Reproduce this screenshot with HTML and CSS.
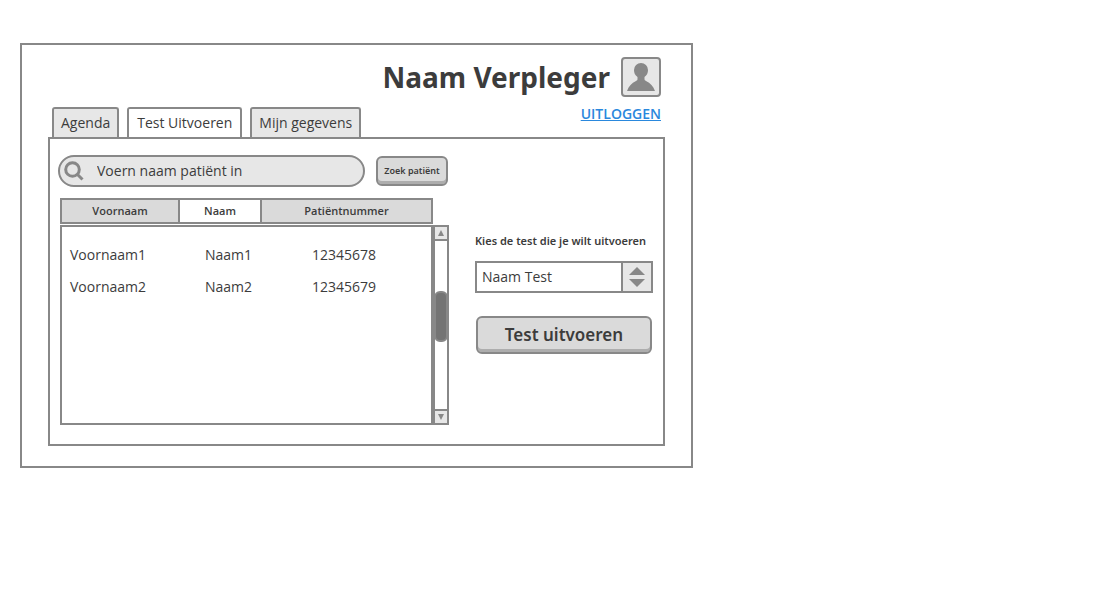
FILE: index.html
```html
<!DOCTYPE html>
<html lang="nl">
<head>
<meta charset="utf-8">
<meta name="viewport" content="width=device-width, initial-scale=1">
<title>Test Uitvoeren</title>
<link rel="stylesheet" href="styles.css">
</head>
<body>
<div class="window">
  <header class="header">
    <h1 class="title">Naam Verpleger</h1>
    <span class="avatar">
      <svg viewBox="0 0 36 36" aria-hidden="true"><path d="M18 4a7 7 0 0 1 7 7c0 3-1 5-3.500 7v2c0 1 .5 1.500 1.500 2C27.500 24 30 27 32 32H4c2-5 4.500-8 9-10c1-.5 1.500-1 1.500-2v-2C12 16 11 14 11 11a7 7 0 0 1 7-7z"/></svg>
    </span>
  </header>
  <div class="bar">
    <nav class="tabs">
      <a class="tab" href="#agenda">Agenda</a>
      <a class="tab tab-active" href="#test" aria-current="page">Test Uitvoeren</a>
      <a class="tab" href="#gegevens">Mijn gegevens</a>
    </nav>
    <a class="logout" href="#uitloggen">UITLOGGEN</a>
  </div>
  <main class="panel">
    <section class="patients">
      <form class="search">
        <label class="search-field">
          <svg class="search-icon" viewBox="0 0 20 20" aria-hidden="true"><circle cx="8.500" cy="8.500" r="6.800"/><path d="M13.500 13.500l5 5"/></svg>
          <input class="search-input" type="text" aria-label="Naam patiënt" placeholder="Voern naam patiënt in">
        </label>
        <button class="button button-small" type="button">Zoek patiënt</button>
      </form>
      <div class="list">
        <table class="table">
          <thead>
            <tr class="head-row"><th>Voornaam</th><th class="sorted">Naam</th><th>Patiëntnummer</th></tr>
          </thead>
          <tbody class="rows">
            <tr class="row"><td>Voornaam1</td><td>Naam1</td><td>12345678</td></tr>
            <tr class="row"><td>Voornaam2</td><td>Naam2</td><td>12345679</td></tr>
          </tbody>
        </table>
        <div class="scrollbar">
          <button class="arrow arrow-up" type="button" aria-label="Omhoog"><svg viewBox="0 0 8 8" aria-hidden="true"><path d="M4 1l3 6H1z"/></svg></button>
          <div class="track"><div class="thumb"></div></div>
          <button class="arrow arrow-down" type="button" aria-label="Omlaag"><svg viewBox="0 0 8 8" aria-hidden="true"><path d="M4 7L1 1h6z"/></svg></button>
        </div>
      </div>
    </section>
    <form class="run">
      <label class="run-label" for="test-select">Kies de test die je wilt uitvoeren</label>
      <div class="picker">
        <select class="select" id="test-select"><option>Naam Test</option></select>
        <span class="stepper"><svg viewBox="0 0 16 20" aria-hidden="true"><path d="M8 0l8 8H0zM0 12h16l-8 8z"/></svg></span>
      </div>
      <button class="button button-large" type="button">Test uitvoeren</button>
    </form>
  </main>
</div>
</body>
</html>
```
FILE: styles.css
```css
:root {
  --line: #888888;
  --soft: #e7e7e7;
  --fill: #dadada;
  --shade: #adadad;
  --text: #3c3c3c;
}

* {
  box-sizing: border-box;
}

body {
  margin: 43px 20px 20px;
  background: #ffffff;
  color: var(--text);
  font: 14px/20px "Open Sans", "Noto Sans", sans-serif;
}

button,
input,
select {
  margin: 0;
  color: inherit;
  font: inherit;
}

.window {
  max-width: 673px;
  padding: 12px 26px 20px;
  border: 2px solid var(--line);
}

.header {
  display: flex;
  align-items: center;
  justify-content: flex-end;
  gap: 11px;
  padding-right: 4px;
}

.title {
  margin: 0;
  font: 700 28px/40px "Noto Sans", sans-serif;
}

.avatar {
  width: 40px;
  height: 40px;
  border: 2px solid var(--line);
  border-radius: 4px;
  background: var(--soft);
}

.avatar svg {
  display: block;
  fill: var(--line);
}

.bar {
  display: flex;
  justify-content: space-between;
  align-items: flex-end;
  padding: 10px 4px 0;
}

.tabs {
  display: flex;
  gap: 8px;
}

.tab {
  padding: 4px 7px;
  border: 2px solid var(--line);
  border-bottom: 0;
  border-radius: 3px 3px 0 0;
  background: var(--soft);
  color: var(--text);
  text-decoration: none;
}

.tab-active {
  padding: 4px 8px;
  background: #ffffff;
}

.logout {
  align-self: flex-start;
  margin-top: -3px;
  color: #2a88dd;
  font-weight: 600;
}

.panel {
  display: grid;
  grid-template-columns: 391fr 178fr;
  gap: 26px;
  padding: 16px 10px 19px 8px;
  border: 2px solid var(--line);
}

.search {
  display: flex;
  align-items: center;
  gap: 11px;
  padding-right: 1px;
}

.search-field {
  display: flex;
  flex: 1;
  align-items: center;
  gap: 13px;
  min-width: 0;
  height: 32px;
  padding: 0 16px 0 4px;
  border: 2px solid var(--line);
  border-radius: 16px;
  background: var(--soft);
}

.search-icon {
  flex: none;
  width: 20px;
  height: 20px;
  fill: none;
  stroke: var(--line);
  stroke-width: 3;
}

.search-input {
  flex: 1;
  min-width: 0;
  padding: 0;
  border: 0;
  outline: 0;
  background: transparent;
}

.search-input::placeholder {
  color: var(--text);
  opacity: 1;
}

.button {
  border: 2px solid var(--line);
  border-radius: 6px;
  background: var(--fill);
  box-shadow: inset 0 -3px var(--shade);
  font-family: "Noto Sans", sans-serif;
  font-weight: 600;
  white-space: nowrap;
}

.button-small {
  width: 72px;
  height: 30px;
  padding: 0;
  font-size: 9px;
}

.button-large {
  height: 38px;
  margin: 23px 1px 0;
  font-size: 17px;
}

.list {
  display: flex;
  margin: 11px 0 0 2px;
}

.table {
  display: block;
  flex: 1;
}

.table thead {
  display: block;
}

.head-row,
.row {
  display: grid;
  grid-template-columns: 118fr 82fr 169fr;
}

.head-row {
  margin-bottom: 1px;
  border: 2px solid var(--line);
  background: var(--fill);
}

.head-row th {
  padding: 0;
  border-right: 2px solid var(--line);
  font-size: 11px;
  font-weight: 600;
  line-height: 22px;
}

.head-row th:last-child {
  border-right: 0;
}

.head-row .sorted {
  background: #ffffff;
}

.rows {
  display: block;
  min-height: 200px;
  padding-top: 12px;
  border: 2px solid var(--line);
}

.row td {
  padding: 6px 0 6px 8px;
}

.row td:nth-child(2) {
  padding-left: 25px;
}

.row td:nth-child(3) {
  padding-left: 50px;
}

.scrollbar {
  display: flex;
  flex-direction: column;
  width: 16px;
  margin-top: 27px;
  border: 2px solid var(--line);
}

.arrow {
  display: grid;
  place-items: center;
  height: 14px;
  padding: 0;
  border: 0 solid var(--line);
  background: var(--soft);
}

.arrow svg {
  width: 8px;
  height: 8px;
  fill: var(--line);
}

.arrow-up {
  border-bottom-width: 2px;
}

.arrow-down {
  border-top-width: 2px;
}

.track {
  flex: 1;
  padding-top: 50px;
}

.thumb {
  height: 51px;
  margin: 0 -1px;
  border: 2px solid var(--line);
  border-radius: 6px;
  background: #747474;
}

.run {
  display: flex;
  flex-direction: column;
  padding-top: 76px;
}

.run-label {
  font: 600 11px/20px "Noto Sans", sans-serif;
  white-space: nowrap;
}

.picker {
  display: grid;
  grid-template-columns: 1fr 32px;
  margin-top: 10px;
}

.select {
  grid-area: 1 / 1 / 2 / 3;
  height: 32px;
  padding: 0 36px 0 5px;
  border: 2px solid var(--line);
  border-radius: 0;
  background: #ffffff;
  appearance: none;
}

.stepper {
  display: grid;
  grid-area: 1 / 2;
  place-items: center;
  border: 2px solid var(--line);
  background: var(--soft);
  pointer-events: none;
}

.stepper svg {
  width: 16px;
  height: 20px;
  fill: var(--line);
}
```
